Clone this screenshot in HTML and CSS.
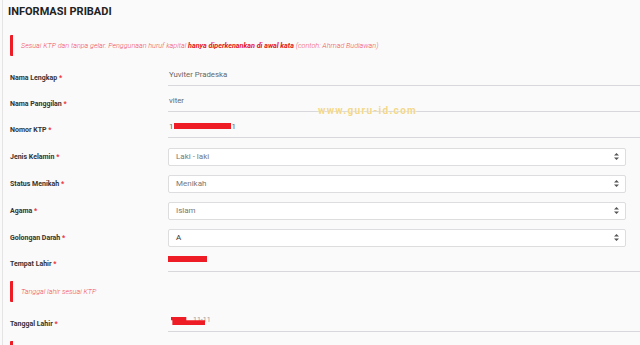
FILE: index.html
```html
<!DOCTYPE html>
<html lang="id">

<head>
    <meta charset="UTF-8">
    <meta name="viewport" content="width=device-width, initial-scale=1.0">
    <title>Informasi Pribadi</title>
    <link rel="stylesheet" href="styles.css">
</head>

<body>
    <div class="panel">
        <h1 class="title">INFORMASI PRIBADI</h1>

        <div class="note">Sesuai KTP dan tanpa gelar. Penggunaan huruf kapital <b>hanya diperkenankan di awal kata</b> (contoh: Ahmad Budiawan)</div>

        <div class="row">
            <label>Nama Lengkap <span class="req">*</span></label>
            <div class="input">Yuviter Pradeska</div>
        </div>
        <div class="row">
            <label>Nama Panggilan <span class="req">*</span></label>
            <div class="input">viter</div>
        </div>
        <div class="row">
            <label>Nomor KTP <span class="req">*</span></label>
            <div class="input">1<span class="redact ktp"></span>1</div>
        </div>

        <div class="row tall">
            <label>Jenis Kelamin <span class="req">*</span></label>
            <div class="select"><span>Laki - laki</span><svg width="5" height="7" viewBox="0 0 5 7"><path d="M2.5 0 L5 2.6 H0 Z M2.5 7 L5 4.4 H0 Z" fill="#555"/></svg></div>
        </div>
        <div class="row tall">
            <label>Status Menikah <span class="req">*</span></label>
            <div class="select"><span>Menikah</span><svg width="5" height="7" viewBox="0 0 5 7"><path d="M2.5 0 L5 2.6 H0 Z M2.5 7 L5 4.4 H0 Z" fill="#555"/></svg></div>
        </div>
        <div class="row tall">
            <label>Agama <span class="req">*</span></label>
            <div class="select"><span>Islam</span><svg width="5" height="7" viewBox="0 0 5 7"><path d="M2.5 0 L5 2.6 H0 Z M2.5 7 L5 4.4 H0 Z" fill="#555"/></svg></div>
        </div>
        <div class="row tall">
            <label>Golongan Darah <span class="req">*</span></label>
            <div class="select"><span class="dark">A</span><svg width="5" height="7" viewBox="0 0 5 7"><path d="M2.5 0 L5 2.6 H0 Z M2.5 7 L5 4.4 H0 Z" fill="#555"/></svg></div>
        </div>

        <div class="row">
            <label>Tempat Lahir <span class="req">*</span></label>
            <div class="input"><span class="redact place"></span></div>
        </div>

        <div class="note">Tanggal lahir sesuai KTP</div>

        <div class="row">
            <label>Tanggal Lahir <span class="req">*</span></label>
            <div class="input"><span class="redact date"></span><span class="faint">11-11</span></div>
        </div>

        <div class="note"></div>

        <div class="watermark">www.guru-id.com</div>
    </div>
</body>

</html>
```

FILE: styles.css
```css
* {
    margin: 0;
    padding: 0;
    box-sizing: border-box;
}

body {
    background-color: #fafafa;
    font-family: Roboto, "Liberation Sans", sans-serif;
    color: #333;
    overflow: hidden;
    height: 345px;
}

.panel {
    position: relative;
    height: 345px;
    overflow: hidden;
    margin-left: 2px;
    border-left: 1px solid #e4e4e4;
    padding: 5px 0 0 7px;
}

.title {
    margin: 0 0 16px -2px;
    font-size: 11px;
    line-height: 14px;
    font-weight: bold;
    color: #222;
}

/* red bar hint */
.note {
    margin: 4px 0 9px;
    height: 21px;
    line-height: 21px;
    border-left: 3px solid #ee1c25;
    border-radius: 1px;
    padding-left: 8px;
    font-size: 7.2px;
    font-style: italic;
    font-weight: 300;
    color: #f0505a;
}

.note b {
    font-weight: bold;
    color: #e4141c;
}

.row {
    display: flex;
    align-items: center;
    height: 26px;
}

.row.tall {
    height: 27px;
}

.row label {
    width: 158px;
    flex-shrink: 0;
    font-size: 7px;
    font-weight: bold;
    color: #333;
}

.req {
    color: #ee2b33;
}

.input {
    flex: 1;
    height: 16px;
    padding: 0 0 6px 1px;
    border-bottom: 1px solid #d8d8dc;
    font-size: 7.8px;
    line-height: 9px;
    color: #666;
    white-space: nowrap;
}

.select {
    flex: 1;
    height: 18px;
    margin-right: 14px;
    display: flex;
    align-items: center;
    justify-content: space-between;
    padding: 0 6px 0 7px;
    background-color: #fff;
    border: 1px solid #dddde0;
    border-radius: 2px;
    font-size: 8px;
    color: #777;
}

.select .dark {
    color: #333;
}

.redact {
    display: inline-block;
    background-color: #ee1c25;
    vertical-align: middle;
}

.ktp {
    width: 57px;
    height: 6px;
    margin: -2px 0 0 1px;
}

.place {
    width: 39px;
    height: 6px;
    margin: -4px 0 0 -1px;
}

.date {
    width: 34px;
    height: 8px;
    margin: 0 0 0 2px;
    clip-path: polygon(0 0, 45% 0, 45% 40%, 100% 40%, 100% 100%, 4% 100%, 4% 40%, 0 40%);
}

.faint {
    color: #999;
    font-size: 7px;
    margin-left: -12px;
    vertical-align: middle;
}

.watermark {
    position: absolute;
    left: 315px;
    top: 105px;
    font-size: 10px;
    font-weight: bold;
    letter-spacing: 1.3px;
    color: #f2d78a;
    text-shadow: 0 0 2px #fff;
}
```
